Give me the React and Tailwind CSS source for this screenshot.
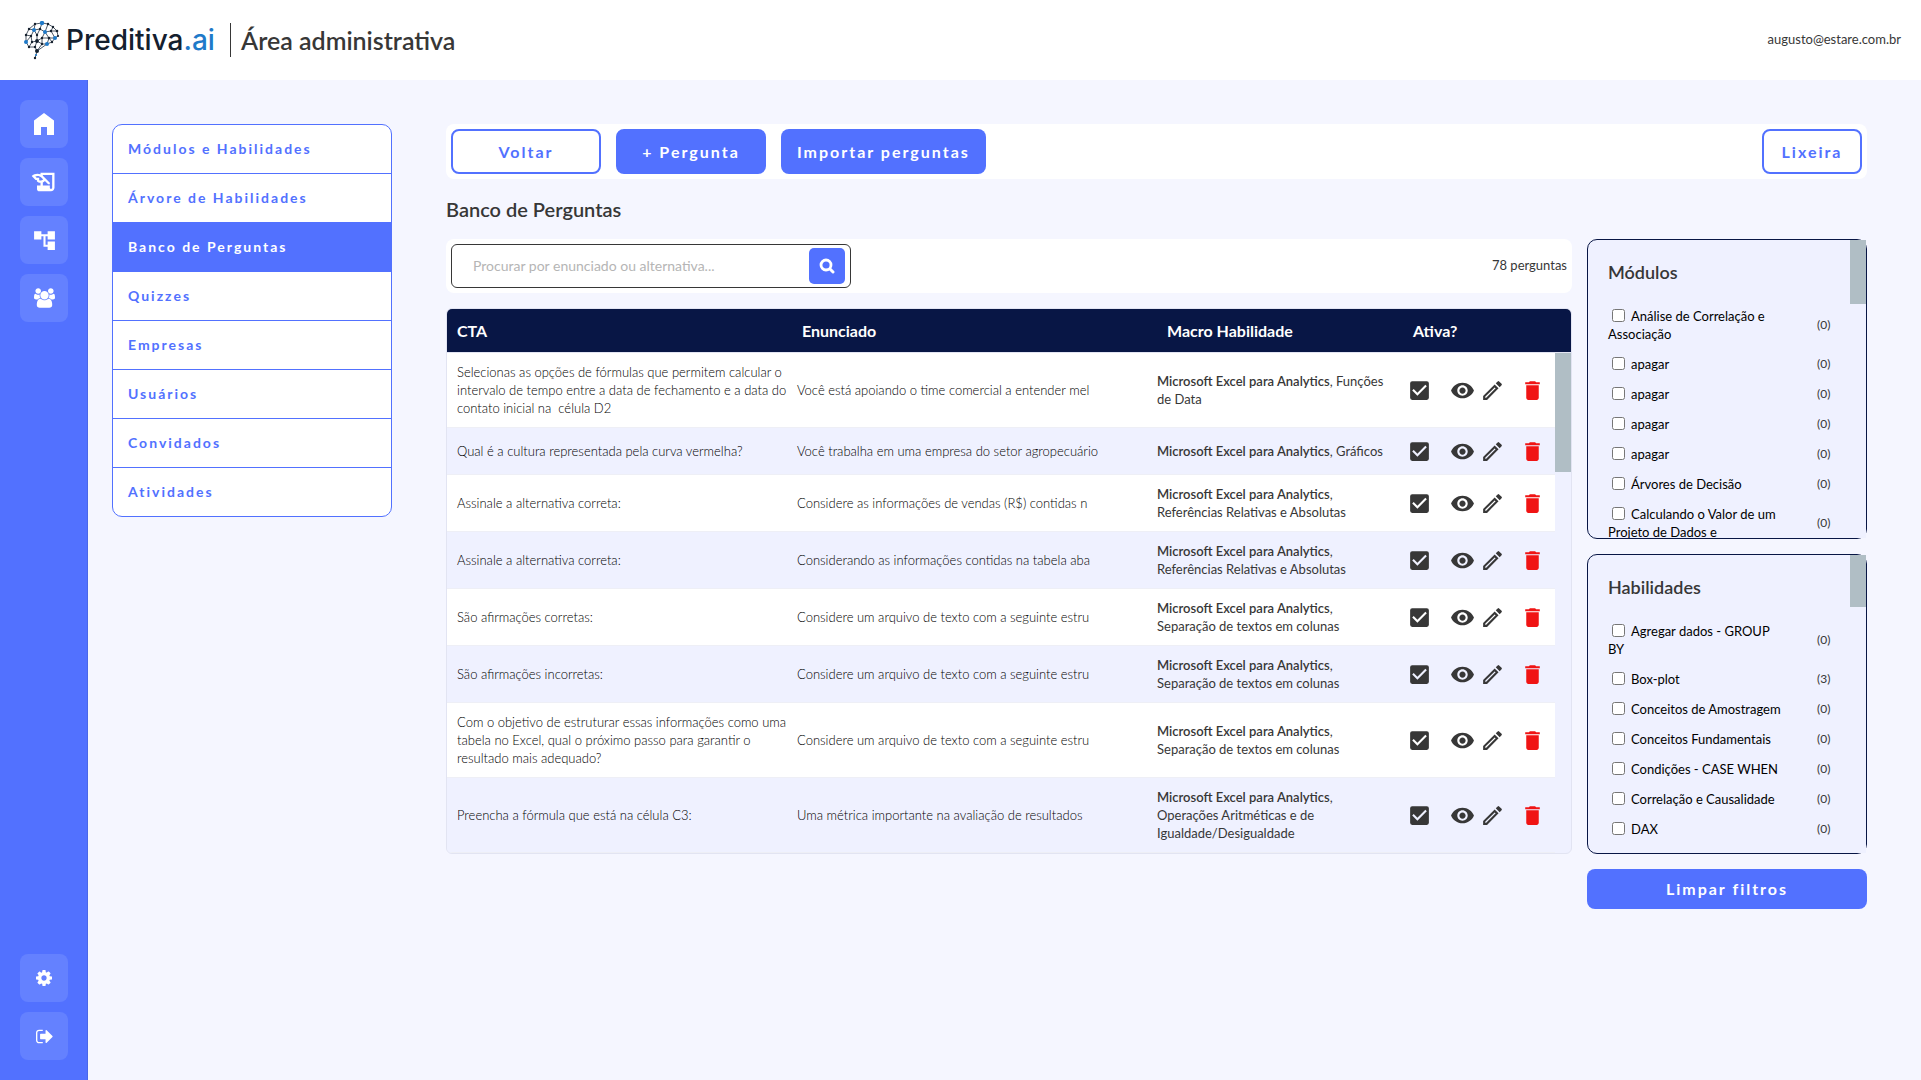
import { MdHistoryEdu, MdAccountTree, MdCheckBox, MdVisibility, MdOutlineModeEdit, MdDelete } from "react-icons/md";

const NODES = [
  [18, 2, 2.2, 1], [11, 3, 1.2, 0], [24, 3, 1.2, 0], [29, 6, 1.2, 0], [5, 8, 1.2, 0], [10, 9, 2, 1],
  [16, 8, 1.2, 0], [21, 11, 2, 1], [27, 10, 1.2, 0], [33, 10, 1.3, 0], [31, 17, 2, 1], [34, 15, 1.1, 0],
  [2, 14, 1.2, 0], [7, 15, 1.2, 0], [13, 14, 1.2, 0], [18, 17, 1.2, 0], [25, 17, 1.3, 0], [2, 21, 2, 1],
  [8, 21, 1.2, 0], [13, 20, 1.9, 0], [5, 26, 1.2, 0], [11, 26, 1.2, 0], [18, 23, 1.2, 0], [23, 23, 2, 1],
  [28, 21, 1.2, 0], [13, 30, 2, 0], [12, 34, 1.1, 1], [11, 37, 1.2, 0],
];
const EDGES = [
  [0, 1], [0, 2], [2, 3], [1, 4], [1, 5], [0, 6], [2, 7], [3, 8], [3, 9], [9, 11], [11, 10], [4, 12], [4, 5],
  [5, 6], [6, 7], [7, 8], [8, 9], [8, 10], [5, 13], [5, 14], [6, 14], [7, 15], [7, 16], [10, 16], [12, 13],
  [12, 17], [13, 17], [13, 18], [14, 19], [15, 19], [15, 22], [16, 23], [16, 24], [10, 24], [17, 20],
  [18, 20], [18, 19], [19, 21], [20, 21], [21, 25], [22, 25], [22, 23], [23, 24], [23, 25], [25, 26], [26, 27], [19, 22], [15, 16],
];

function Brain() {
  return (
    <svg viewBox="0 0 36 39" className="h-[39px] w-9" aria-hidden="true">
      {EDGES.map(([a, b], i) => (
        <line key={i} x1={NODES[a][0]} y1={NODES[a][1]} x2={NODES[b][0]} y2={NODES[b][1]} stroke="#23303f" strokeWidth="0.8" />
      ))}
      {NODES.map(([x, y, r, blue], i) => (
        <circle key={i} cx={x} cy={y} r={r} fill={blue ? "#1f7ac9" : "#14202e"} />
      ))}
    </svg>
  );
}

const HomeIcon = () => (
  <svg viewBox="0 0 20 22" className="h-[22px] w-5" fill="currentColor" aria-hidden="true">
    <path d="M10 0 0 7.5V22h7v-8h6v8h7V7.500z" />
  </svg>
);
const UsersIcon = () => (
  <svg viewBox="-64 0 1920 1792" className="h-5 w-[21px]" fill="currentColor" aria-hidden="true">
    <path d="M529 896q-162 5-265 128h-134q-82 0-138-40.500t-56-118.500q0-353 124-353 6 0 43.500 21t97.500 42.500 119 21.500q67 0 133-23-5 37-5 66 0 139 81 256zm1071 637q0 120-73 189.500t-194 69.500h-874q-121 0-194-69.500t-73-189.500q0-53 3.500-103.500t14-109 26.500-108.500 43-97.500 62-81 85.500-53.500 111.500-20q10 0 43 21.500t73 48 107 48 135 21.500 135-21.500 107-48 73-48 43-21.500q61 0 111.500 20t85.500 53.500 62 81 43 97.500 26.500 108.500 14 109 3.500 103.500zm-1024-1277q0 106-75 181t-181 75-181-75-75-181 75-181 181-75 181 75 75 181zm704 384q0 159-112.500 271.500t-271.500 112.500-271.500-112.500-112.500-271.500 112.500-271.500 271.500-112.500 271.500 112.500 112.500 271.500zm576 225q0 78-56 118.500t-138 40.500h-134q-103-123-265-128 81-117 81-256 0-29-5-66 66 23 133 23 59 0 119-21.500t97.500-42.500 43.500-21q124 0 124 353zm-128-609q0 106-75 181t-181 75-181-75-75-181 75-181 181-75 181 75 75 181z" />
  </svg>
);
const CogIcon = () => (
  <svg viewBox="128 128 1536 1536" className="size-4" fill="currentColor" aria-hidden="true">
    <path d="M1152 896q0-106-75-181t-181-75-181 75-75 181 75 181 181 75 181-75 75-181zm512-109v222q0 12-8 23t-20 13l-185 28q-19 54-39 91 35 50 107 138 10 12 10 25t-9 23q-27 37-99 108t-94 71q-12 0-26-9l-138-108q-44 23-91 38-16 136-29 186-7 28-36 28h-222q-14 0-24.500-8.500t-11.500-21.500l-28-184q-49-16-90-37l-141 107q-10 9-25 9-14 0-25-11-126-114-165-168-7-10-7-23 0-12 8-23 15-21 51-66.500t54-70.500q-27-50-41-99l-183-27q-13-2-21-12.500t-8-23.500v-222q0-12 8-23t19-13l186-28q14-46 39-92-40-57-107-138-10-12-10-24 0-10 9-23 26-36 98.500-107.500t94.500-71.500q13 0 26 10l138 107q44-23 91-38 16-136 29-186 7-28 36-28h222q14 0 24.500 8.500t11.500 21.500l28 184q49 16 90 37l142-107q9-9 24-9 13 0 25 10 129 119 165 170 7 8 7 22 0 12-8 23-15 21-51 66.500t-54 70.500q26 50 41 98l183 28q13 2 21 12.500t8 23.500z" />
  </svg>
);
const ExitIcon = () => (
  <svg viewBox="64 192 1600 1408" className="h-[15px] w-[17px]" fill="currentColor" aria-hidden="true">
    <path d="M704 1440q0 4 1 20t.5 26.500-3 23.500-10 19.500-20.500 6.500h-320q-119 0-203.500-84.500t-84.500-203.500v-704q0-119 84.500-203.500t203.500-84.500h320q13 0 22.500 9.500t9.500 22.500q0 4 1 20t.5 26.500-3 23.500-10 19.500-20.500 6.500h-320q-66 0-113 47t-47 113v704q0 66 47 113t113 47h312l11.500 1 11.500 3 8 5.500 7 9 2 13.500zm928-544q0 26-19 45l-544 544q-19 19-45 19t-45-19-19-45v-288h-448q-26 0-45-19t-19-45v-384q0-26 19-45t45-19h448v-288q0-26 19-45t45-19 45 19l544 544q19 19 19 45z" />
  </svg>
);
const SearchIcon = () => (
  <svg viewBox="0 0 16 16" className="size-4" fill="none" stroke="currentColor" aria-hidden="true">
    <circle cx="7" cy="7" r="5" strokeWidth="2.800" />
    <path d="m11 11 3 3" strokeWidth="3" strokeLinecap="round" />
  </svg>
);

function RailButton({ label, children }) {
  return (
    <button aria-label={label} className="flex size-12 items-center justify-center rounded-lg bg-[#6481ff] text-white">
      {children}
    </button>
  );
}

const MENU = ["Módulos e Habilidades", "Árvore de Habilidades", "Banco de Perguntas", "Quizzes", "Empresas", "Usuários", "Convidados", "Atividades"];

const EXCEL = "Microsoft Excel para Analytics";
const ROWS = [
  ["Selecionas as opções de fórmulas que permitem calcular o intervalo de tempo entre a data de fechamento e a data do contato inicial na\u00a0 célula D2", "Você está apoiando o time comercial a entender mel", "Funções de Data"],
  ["Qual é a cultura representada pela curva vermelha?", "Você trabalha em uma empresa do setor agropecuário", "Gráficos"],
  ["Assinale a alternativa correta:", "Considere as informações de vendas (R$) contidas n", "Referências Relativas e Absolutas"],
  ["Assinale a alternativa correta:", "Considerando as informações contidas na tabela aba", "Referências Relativas e Absolutas"],
  ["São afirmações corretas:", "Considere um arquivo de texto com a seguinte estru", "Separação de textos em colunas"],
  ["São afirmações incorretas:", "Considere um arquivo de texto com a seguinte estru", "Separação de textos em colunas"],
  ["Com o objetivo de estruturar essas informações como uma tabela no Excel, qual o próximo passo para garantir o resultado mais adequado?", "Considere um arquivo de texto com a seguinte estru", "Separação de textos em colunas"],
  ["Preencha a fórmula que está na célula C3:", "Uma métrica importante na avaliação de resultados", "Operações Aritméticas e de Igualdade/Desigualdade"],
];

const MODULES = [
  ["Análise de Correlação e Associação", 0], ["apagar", 0], ["apagar", 0], ["apagar", 0], ["apagar", 0],
  ["Árvores de Decisão", 0], ["Calculando o Valor de um Projeto de Dados e", 0],
];
const SKILLS = [
  ["Agregar dados - GROUP BY", 0], ["Box-plot", 3], ["Conceitos de Amostragem", 0], ["Conceitos Fundamentais", 0],
  ["Condições - CASE WHEN", 0], ["Correlação e Causalidade", 0], ["DAX", 0],
];

function FilterPanel({ title, items, thumb }) {
  return (
    <section className="flex h-[300px] rounded-[10px] border border-[#081645] bg-[#eff1ff]">
      <div className="flex-1 overflow-hidden pt-5 pr-4 pl-5">
        <h3 className="mb-[17px] text-lg leading-6 font-semibold text-[#373737]">{title}</h3>
        <ul>
          {items.map(([name, count], i) => (
            <li key={i} className="flex items-center justify-between py-1.5">
              <label className="w-[176px] text-[13px] leading-[18px] text-black">
                <input type="checkbox" className="mr-1.5 ml-1 size-[13px] align-[-1px]" />
                {name}
              </label>
              <span className="w-[17px] text-xs leading-[18px] whitespace-nowrap text-[#373737]">({count})</span>
            </li>
          ))}
        </ul>
      </div>
      <div className="w-4 bg-[#eff1ff]">
        <div className={`${thumb} bg-[#b0bec5]`} />
      </div>
    </section>
  );
}

export default function App() {
  return (
    <div className="flex min-h-screen flex-col bg-[#f5f6ff] font-['Lato',sans-serif] text-[#373737]">
      <header className="flex h-20 items-center justify-between bg-white pr-5 pl-6">
        <div className="flex items-center">
          <Brain />
          <span className="ml-1.5 w-[150px] font-['Inter',sans-serif] text-[28px] leading-8 font-medium whitespace-nowrap text-[#14202e]">
            Preditiva<span className="text-[#1f7ac9]">.ai</span>
          </span>
          <span className="mr-2.5 ml-3.5 h-[34px] w-px bg-[#373737]" />
          <h1 className="text-[25px] leading-8 font-semibold">Área administrativa</h1>
        </div>
        <span className="text-[13px]">augusto@estare.com.br</span>
      </header>

      <div className="flex flex-1">
        <nav className="flex w-[88px] flex-col justify-between border-r border-[#4a67e8] bg-[#5271ff] py-5 pl-5">
          <div className="flex flex-col gap-2.5">
            <RailButton label="Início"><HomeIcon /></RailButton>
            <RailButton label="Cursos"><MdHistoryEdu size={28} /></RailButton>
            <RailButton label="Árvore"><MdAccountTree size={25} /></RailButton>
            <RailButton label="Usuários"><UsersIcon /></RailButton>
          </div>
          <div className="flex flex-col gap-2.5">
            <RailButton label="Configurações"><CogIcon /></RailButton>
            <RailButton label="Sair"><ExitIcon /></RailButton>
          </div>
        </nav>

        <div className="flex flex-1 items-start gap-[54px] pt-11 pr-[54px] pl-6">
          <ul className="w-[280px] shrink-0 divide-y divide-[#5271ff] overflow-hidden rounded-[10px] border border-[#5271ff] bg-white">
            {MENU.map((m) => (
              <li key={m}>
                <a
                  href="#"
                  className={`flex h-12 items-center px-[15px] text-sm font-bold tracking-[2px] ${m === "Banco de Perguntas" ? "bg-[#5271ff] text-white" : "text-[#5271ff]"}`}
                >
                  {m}
                </a>
              </li>
            ))}
          </ul>

          <main className="min-w-0 flex-1">
            <div className="flex gap-[15px] rounded-lg bg-white p-[5px] text-base font-bold tracking-[2px]">
              <button className="h-[45px] w-[150px] rounded-lg border-2 border-[#5271ff] text-[#5271ff]">Voltar</button>
              <button className="h-[45px] w-[150px] rounded-lg bg-[#5271ff] text-white">+ Pergunta</button>
              <button className="h-[45px] rounded-lg bg-[#5271ff] px-4 text-white">Importar perguntas</button>
              <button className="ml-auto h-[45px] w-[100px] rounded-lg border-2 border-[#5271ff] text-[#5271ff]">Lixeira</button>
            </div>

            <h2 className="my-4 text-xl font-semibold">Banco de Perguntas</h2>

            <div className="flex items-start gap-[15px]">
              <div className="min-w-0 flex-1">
                <form className="flex items-center justify-between rounded-lg bg-white p-[5px]">
                  <div className="flex h-11 w-[400px] items-center rounded-md border border-[#373737] pr-[5px] pl-[21px]">
                    <input
                      type="search"
                      aria-label="Procurar"
                      placeholder="Procurar por enunciado ou alternativa..."
                      className="min-w-0 flex-1 text-sm outline-none placeholder:text-[#b5b5b5]"
                    />
                    <button type="button" aria-label="Buscar" className="flex size-9 items-center justify-center rounded-[5px] bg-[#5271ff] text-white">
                      <SearchIcon />
                    </button>
                  </div>
                  <span className="text-[13px]">78 perguntas</span>
                </form>

                <table className="mt-[15px] block overflow-hidden rounded-md border border-[#e2e4f2] bg-[#eff1ff]">
                  <thead className="block border-b border-[#e2e4f2] bg-[#081645] text-base leading-6 text-white">
                    <tr className="grid h-[43px] grid-cols-[345fr_365fr_246fr_168fr] items-center text-left">
                      <th className="pl-2.5 font-bold">CTA</th>
                      <th className="pl-2.5 font-bold">Enunciado</th>
                      <th className="pl-2.5 font-bold">Macro Habilidade</th>
                      <th className="pl-2.5 font-bold">Ativa?</th>
                    </tr>
                  </thead>
                  <tbody className="relative block pr-4 text-[13px] leading-[18px]">
                    {ROWS.map(([cta, text, skill], i) => (
                      <tr key={i} className="grid min-h-[47px] grid-cols-[340fr_360fr_250fr_43fr_35fr_35fr_45fr] items-center border-b border-[#eeeff6] py-2.5 odd:bg-white even:bg-[#eff1ff]">
                        <td className="pl-2.5 font-light text-black">{cta}</td>
                        <td className="pl-2.5 font-light text-black">{text}</td>
                        <td className="pr-2.5 pl-2.5"><b className="font-semibold">{EXCEL}</b>, {skill}</td>
                        <td className="pl-2.5">
                          <label className="block">
                            <input type="checkbox" defaultChecked aria-label="Ativa" className="sr-only" />
                            <MdCheckBox size={25} />
                          </label>
                        </td>
                        <td className="pl-2.5"><button aria-label="Visualizar" className="block"><MdVisibility size={25} /></button></td>
                        <td className="pl-[5px]"><button aria-label="Editar" className="block"><MdOutlineModeEdit size={25} /></button></td>
                        <td className="pl-2.5"><button aria-label="Excluir" className="block text-[#f01414]"><MdDelete size={25} /></button></td>
                      </tr>
                    ))}
                    <tr aria-hidden="true" className="absolute top-0 right-0 h-[119px] w-4 bg-[#b0bec5]" />
                  </tbody>
                </table>
              </div>

              <aside className="flex w-[280px] shrink-0 flex-col gap-[15px]">
                <FilterPanel title="Módulos" items={MODULES} thumb="h-16" />
                <FilterPanel title="Habilidades" items={SKILLS} thumb="h-[52px]" />
                <button className="h-10 rounded-lg bg-[#5271ff] text-base font-bold tracking-[2px] text-white">Limpar filtros</button>
              </aside>
            </div>
          </main>
        </div>
      </div>
    </div>
  );
}
